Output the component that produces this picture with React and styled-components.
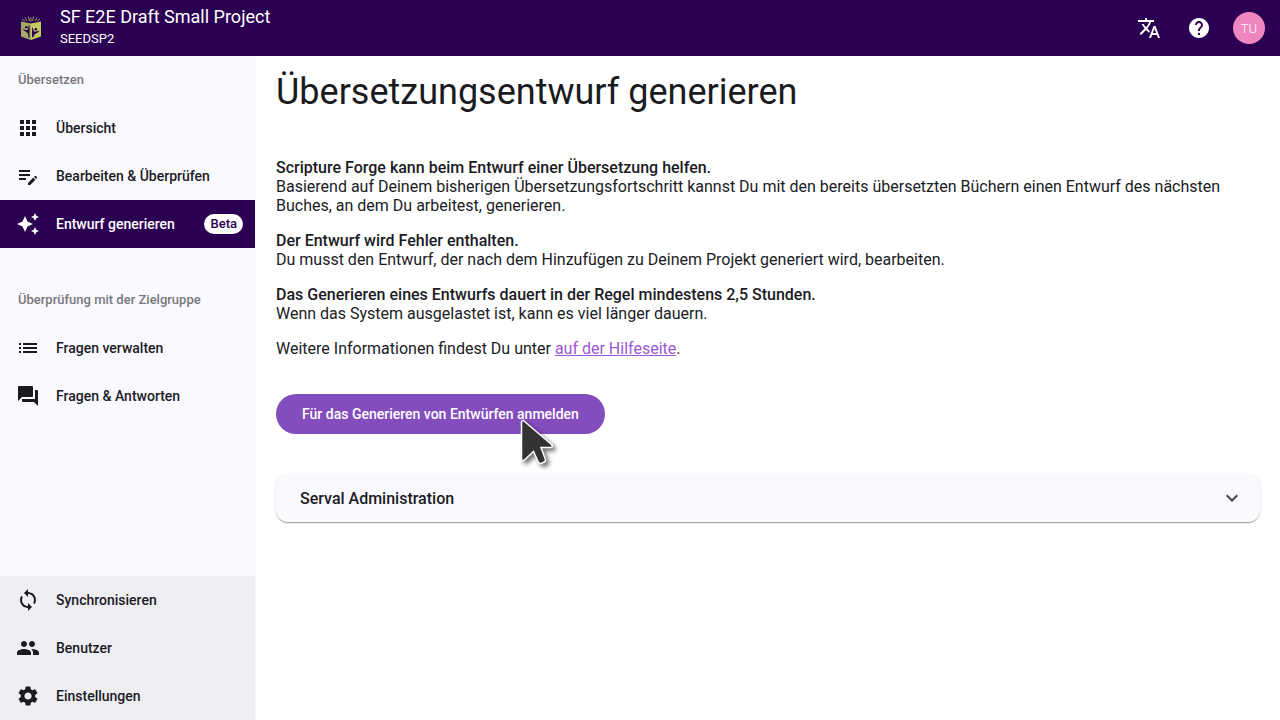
import React from 'react';
import styled, { createGlobalStyle, css } from 'styled-components';
import {
  MdApps,
  MdEditNote,
  MdAutoAwesome,
  MdList,
  MdQuestionAnswer,
  MdLoop,
  MdPeople,
  MdSettings,
  MdTranslate,
  MdHelp,
} from 'react-icons/md';

const GlobalStyle = createGlobalStyle`
  *, *::before, *::after { box-sizing: border-box; }
  body {
    margin: 0;
    background: #fff;
    color: #1a1b1f;
    font-family: Roboto, "Liberation Sans", sans-serif;
    font-size: 16px;
    line-height: 19px;
  }
  button { font-family: inherit; cursor: pointer; }
`;

const Page = styled.div`
  display: flex;
  flex-direction: column;
  min-height: 100vh;
`;

const Toolbar = styled.header`
  display: flex;
  align-items: center;
  height: 56px;
  padding: 0 15px 0 20px;
  background: #2b0052;
  color: #fff;
`;

const LogoLink = styled.a`
  display: flex;
  margin-right: 18px;
`;

const ProjectTitle = styled.div`
  flex: 1;
  min-width: 0;
  padding-bottom: 2px;
`;

const ProjectName = styled.div`
  font-size: 18px;
  line-height: 24px;
`;

const ProjectCode = styled.div`
  font-size: 13px;
  line-height: 20px;
`;

const ToolbarActions = styled.div`
  display: flex;
  align-items: center;
  gap: 26px;
`;

const IconButton = styled.button`
  display: flex;
  padding: 0;
  border: 0;
  background: none;
  color: inherit;
  font-size: 24px;
`;

const Avatar = styled.button`
  width: 32px;
  height: 32px;
  margin-left: -4px;
  padding: 0;
  border: 0;
  border-radius: 50%;
  background: #ee87c0;
  color: #fff;
  font-size: 13px;
  font-weight: 300;
`;

const Body = styled.div`
  display: flex;
  flex: 1;
`;

const Sidebar = styled.nav`
  display: flex;
  flex-direction: column;
  flex: none;
  width: 256px;
  border-right: 1px solid #faf9ff;
  background: #faf9ff;
`;

const GroupLabel = styled.h2`
  margin: 0;
  padding: 0 18px;
  color: #78777c;
  font-size: 13px;
  font-weight: 500;
  line-height: 48px;
`;

const NavGroup = styled.div`
  margin-bottom: 28px;
`;

const NavFooter = styled.div`
  margin-top: auto;
  background: #efeef4;
`;

const NavLink = styled.a`
  display: flex;
  align-items: center;
  height: 48px;
  padding: 0 12px 0 16px;
  color: #1a1b1f;
  font-size: 14px;
  font-weight: 500;
  text-decoration: none;
  ${({ $active }) =>
    $active &&
    css`
      background: #2b0052;
      color: #fff;
    `}
  svg {
    flex: none;
    width: 24px;
    height: 24px;
    margin-right: 16px;
  }
`;

const Badge = styled.span`
  margin-left: auto;
  padding: 0 6px;
  border-radius: 10px;
  background: #fff;
  color: #2b0052;
  font-size: 13px;
  line-height: 20px;
`;

const Main = styled.main`
  flex: 1;
  min-width: 0;
  padding: 14px 20px 20px;
`;

const Heading = styled.h1`
  margin: 0 0 44px;
  font-size: 36px;
  font-weight: 400;
  line-height: 44px;
`;

const Intro = styled.p`
  margin: 0 0 16px;
  strong {
    display: block;
    font-weight: 500;
  }
`;

const HelpLink = styled.a`
  color: #9a58d6;
  text-decoration: underline;
`;

const SignUp = styled.div`
  position: relative;
  width: fit-content;
  margin: 36px 0 40px;
`;

const PrimaryButton = styled.button`
  height: 40px;
  padding: 0 26px;
  border: 0;
  border-radius: 20px;
  background: #844dbe;
  color: #fff;
  font-size: 14px;
  font-weight: 500;
`;

const Pointer = styled.svg`
  position: absolute;
  top: 22px;
  left: 241px;
  pointer-events: none;
  overflow: visible;
  filter: drop-shadow(3px 3px 2px rgba(0, 0, 0, 0.55));
`;

const Panel = styled.button`
  display: flex;
  align-items: center;
  justify-content: space-between;
  width: 100%;
  height: 48px;
  padding: 0 22px 0 24px;
  border: 0;
  border-radius: 12px;
  background: #faf9ff;
  box-shadow: 0 2px 1px -1px rgba(0, 0, 0, 0.2), 0 1px 1px rgba(0, 0, 0, 0.14),
    0 1px 3px rgba(0, 0, 0, 0.12);
  color: #1a1b1f;
  font-size: 16px;
  font-weight: 500;
`;

const Logo = () => (
  <svg width="22" height="26" viewBox="0 0 22 26" aria-hidden="true">
    <path d="M1 6.500 11 8.500v16.500L1 21.500z" fill="#a5ab63" />
    <path d="M21 6.500 11 8.500v16.500l10-3.500z" fill="#bfcb5f" />
    <path
      d="M2 4l3 2.200M5 2.500l2 3.500M8.500 1.500l1 4.500M11 2.500v4M13.500 1.500l-1 4.500M17 2.500l-2 3.500M20 4l-3 2.200"
      stroke="#b9c267"
      strokeWidth="0.800"
      fill="none"
    />
    <circle cx="6.300" cy="12.300" r="1.300" fill="#2b0052" />
    <circle cx="15.800" cy="14.200" r="1.300" fill="#2b0052" />
    <path
      d="M2.500 13.500c1.500 1 2.700 1.700 4 1.700s2-2 2.200-5l.9.200c.2 4-.2 6.500 0 12.600l-1.200-.4c0-2.500-.2-4.600-1.800-5.400s-3.300-1.600-4.100-3.700z"
      fill="#2b0052"
    />
    <path
      d="M12.200 12.500l.8.200c0 2.300.7 3.800 1.700 4s2.800-.7 4.800-1.200c-.8 1.800-2.200 2.300-3.600 2.900-1.500.8-2.200 2-2.500 3.600l-1.400.5c.2-3.500-.2-6 .2-10z"
      fill="#2b0052"
    />
  </svg>
);

const Chevron = () => (
  <svg width="12" height="8" viewBox="0 0 12 8" aria-hidden="true">
    <path d="M0.700 1.200 6 6.500l5.300-5.300" fill="none" stroke="#46464f" strokeWidth="2" />
  </svg>
);

const translateLinks = [
  { label: 'Übersicht', icon: MdApps },
  { label: 'Bearbeiten & Überprüfen', icon: MdEditNote },
  { label: 'Entwurf generieren', icon: MdAutoAwesome, active: true, badge: 'Beta' },
];

const checkingLinks = [
  { label: 'Fragen verwalten', icon: MdList },
  { label: 'Fragen & Antworten', icon: MdQuestionAnswer },
];

const adminLinks = [
  { label: 'Synchronisieren', icon: MdLoop },
  { label: 'Benutzer', icon: MdPeople },
  { label: 'Einstellungen', icon: MdSettings },
];

const NavLinks = ({ items }) =>
  items.map(({ label, icon: Icon, active, badge }) => (
    <NavLink key={label} href="#" $active={active} aria-current={active ? 'page' : undefined}>
      <Icon aria-hidden="true" />
      {label}
      {badge && <Badge>{badge}</Badge>}
    </NavLink>
  ));

export default function App() {
  return (
    <Page>
      <GlobalStyle />
      <Toolbar>
        <LogoLink href="#" aria-label="Scripture Forge">
          <Logo />
        </LogoLink>
        <ProjectTitle>
          <ProjectName>SF E2E Draft Small Project</ProjectName>
          <ProjectCode>SEEDSP2</ProjectCode>
        </ProjectTitle>
        <ToolbarActions>
          <IconButton aria-label="Sprache">
            <MdTranslate />
          </IconButton>
          <IconButton aria-label="Hilfe">
            <MdHelp />
          </IconButton>
          <Avatar>TU</Avatar>
        </ToolbarActions>
      </Toolbar>
      <Body>
        <Sidebar>
          <NavGroup>
            <GroupLabel>Übersetzen</GroupLabel>
            <NavLinks items={translateLinks} />
          </NavGroup>
          <NavGroup>
            <GroupLabel>Überprüfung mit der Zielgruppe</GroupLabel>
            <NavLinks items={checkingLinks} />
          </NavGroup>
          <NavFooter>
            <NavLinks items={adminLinks} />
          </NavFooter>
        </Sidebar>
        <Main>
          <Heading>Übersetzungsentwurf generieren</Heading>
          <Intro>
            <strong>Scripture Forge kann beim Entwurf einer Übersetzung helfen.</strong>
            Basierend auf Deinem bisherigen Übersetzungsfortschritt kannst Du mit den bereits
            übersetzten Büchern einen Entwurf des nächsten Buches, an dem Du arbeitest, generieren.
          </Intro>
          <Intro>
            <strong>Der Entwurf wird Fehler enthalten.</strong>
            Du musst den Entwurf, der nach dem Hinzufügen zu Deinem Projekt generiert wird,
            bearbeiten.
          </Intro>
          <Intro>
            <strong>Das Generieren eines Entwurfs dauert in der Regel mindestens 2,5 Stunden.</strong>
            Wenn das System ausgelastet ist, kann es viel länger dauern.
          </Intro>
          <Intro>
            Weitere Informationen findest Du unter <HelpLink href="#">auf der Hilfeseite</HelpLink>.
          </Intro>
          <SignUp>
            <PrimaryButton>Für das Generieren von Entwürfen anmelden</PrimaryButton>
            <Pointer width="36" height="50" viewBox="0 0 36 50" aria-hidden="true">
              <path
                d="M4.500 6c0-1.500 1.500-1.800 2.500-1L34.500 28.500c1.500 1.300 1 3-1 3H24l4.300 11.500c.6 1.500.2 2.500-1 3l-2.800 1.200c-1.500.6-2.500.2-3.200-1.200L16.500 35.500l-8.500 8C6 45 4.500 44.500 4.500 43z"
                fill="#333"
                stroke="#fff"
                strokeWidth="1.500"
              />
            </Pointer>
          </SignUp>
          <Panel aria-expanded="false">
            Serval Administration
            <Chevron />
          </Panel>
        </Main>
      </Body>
    </Page>
  );
}
